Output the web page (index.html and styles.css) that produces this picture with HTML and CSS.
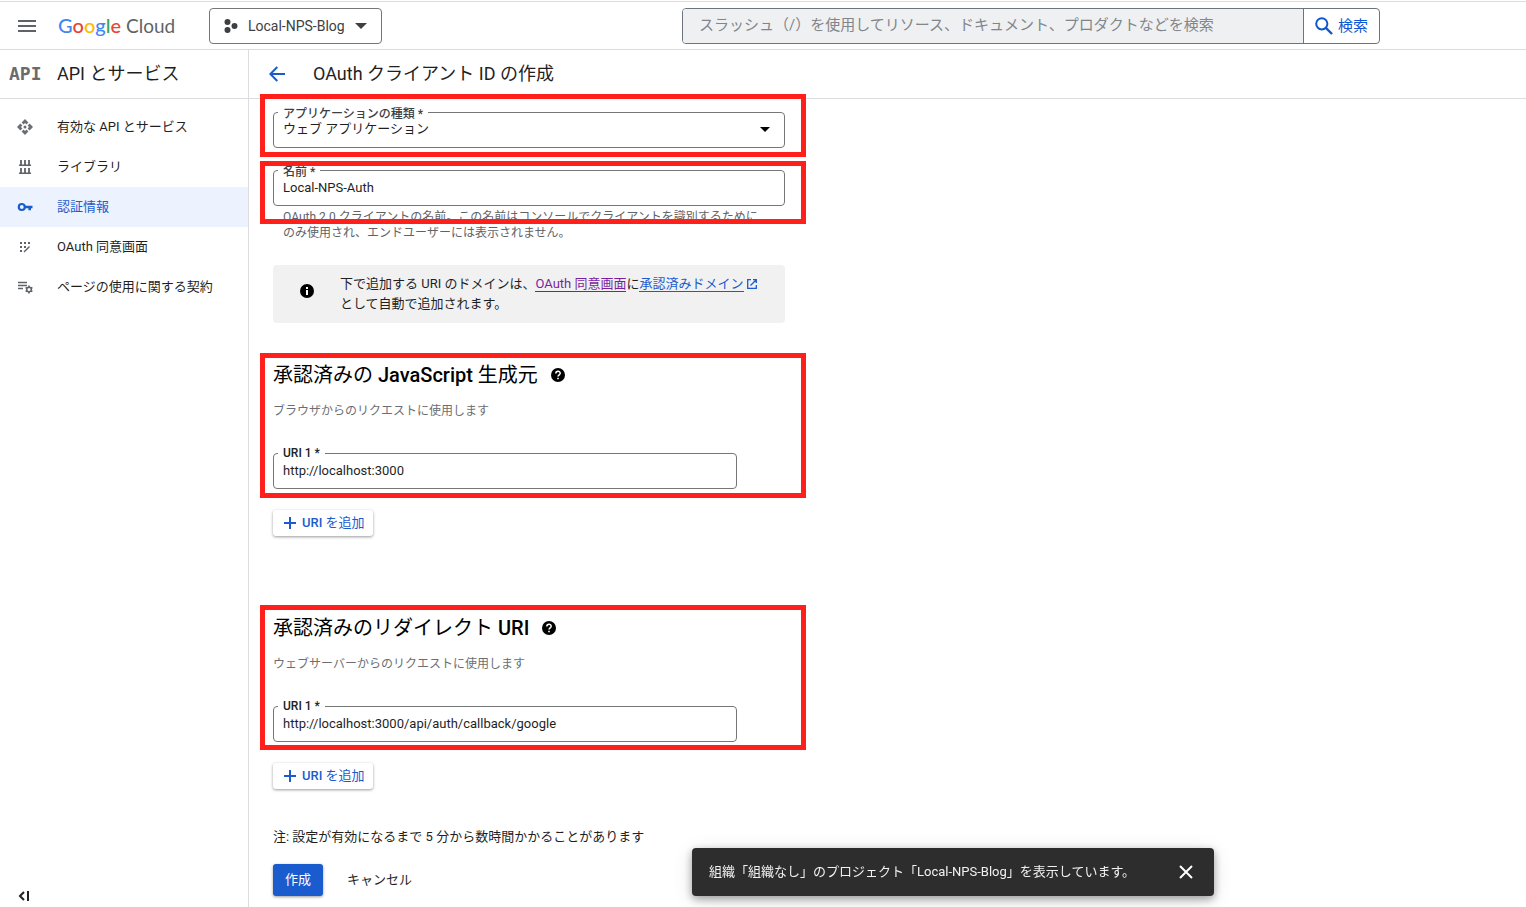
FILE: index.html
```html
<!DOCTYPE html>
<html lang="ja">
<head>
    <meta charset="UTF-8">
    <meta name="viewport" content="width=device-width, initial-scale=1.0">
    <title>OAuth クライアント ID の作成 - Google Cloud</title>
    <link rel="stylesheet" href="styles.css">
</head>
<body>
    <header class="topbar">
        <button class="icon-btn menu-btn" type="button" aria-label="メニュー">
            <svg width="18" height="12" viewBox="0 0 18 12"><path d="M0 1h18M0 6h18M0 11h18" stroke="#5f6368" stroke-width="2"/></svg>
        </button>
        <a class="logo" href="#"><span class="google"><span class="b">G</span><span class="r">o</span><span class="y">o</span><span class="b">g</span><span class="g">l</span><span class="r">e</span></span> <span class="cloud">Cloud</span></a>
        <button class="project-btn" type="button">
            <svg width="14" height="14" viewBox="0 0 14 14" fill="#3c4043"><circle cx="3.5" cy="3" r="3"/><circle cx="10.5" cy="7" r="3"/><circle cx="3.5" cy="11" r="3"/></svg>
            <span>Local-NPS-Blog</span>
            <svg width="12" height="6" viewBox="0 0 12 6"><path d="M0 0h12L6 6z" fill="#3c4043"/></svg>
        </button>
        <form class="search">
            <input type="text" aria-label="検索キーワード" placeholder="スラッシュ（/）を使用してリソース、ドキュメント、プロダクトなどを検索">
            <button type="button">
                <svg width="18" height="18" viewBox="0 0 18 18" fill="none" stroke="#0b57d0"><circle cx="6.8" cy="6.8" r="5.6" stroke-width="2"/><path d="M11 11l6 6" stroke-width="2.4"/></svg>
                検索
            </button>
        </form>
    </header>

    <div class="layout">
        <aside class="sidebar">
            <div class="product">
                <span class="product-icon">API</span>
                <span>API とサービス</span>
            </div>
            <nav class="nav">
                <a href="#">
                    <svg width="16" height="16" viewBox="0 0 16 16" fill="#6b6f73"><path d="M8 0l3.400 3.400-2 2L8 4 6.600 5.400l-2-2zM8 16l-3.400-3.400 2-2L8 12l1.400-1.400 2 2zM0 8l3.400-3.400 2 2L4 8l1.400 1.400-2 2zM16 8l-3.400 3.400-2-2L12 8l-1.400-1.400 2-2z"/><circle cx="8" cy="8" r="1.500"/></svg>
                    有効な API とサービス
                </a>
                <a href="#">
                    <svg width="16" height="16" viewBox="0 0 16 16" fill="none" stroke="#5f6368"><path d="M2 6.300h12M2 14.300h12" stroke-width="1.400"/><path d="M4 1v5M8 1v5M12 1v5M4 9v5M8 9v5M12 9v5" stroke-width="1.800"/></svg>
                    ライブラリ
                </a>
                <a class="active" href="#">
                    <svg width="16" height="16" viewBox="0 0 16 16" fill="none" stroke="#1a5cce"><circle cx="4.800" cy="8" r="3" stroke-width="2.200"/><path d="M8 8h7.500M12.700 8v3.300" stroke-width="2.600"/></svg>
                    認証情報
                </a>
                <a href="#">
                    <svg width="16" height="16" viewBox="0 0 16 16"><path d="M3 3h2v2H3zM7 3h2v2H7zM11 3h2v2h-2zM3 7h2v2H3zM7 7h2v2H7zM3 11h2v2H3z" fill="#5f6368"/><path d="M7 13l5.500-5.500" stroke="#5f6368" stroke-width="1.400"/></svg>
                    OAuth 同意画面
                </a>
                <a href="#">
                    <svg width="16" height="16" viewBox="0 0 16 16" fill="none" stroke="#5f6368"><path d="M1 3.500h9M1 6.500h9M1 9.500h5" stroke-width="1.300"/><circle cx="12" cy="10.500" r="2.300" stroke-width="1.500"/><path d="M12 6.600v1.600M12 12.800v1.600M8.600 8.500l1.400.8M14 11.700l1.400.8M8.600 12.500l1.400-.8M14 9.300l1.400-.8" stroke-width="1.600"/></svg>
                    ページの使用に関する契約
                </a>
            </nav>
            <button class="icon-btn collapse" type="button" aria-label="折りたたむ">
                <svg width="12" height="10" viewBox="0 0 12 10" fill="none" stroke="#202124"><path d="M6 1L2 5l4 4" stroke-width="2"/><path d="M10 0v10" stroke-width="2"/></svg>
            </button>
        </aside>

        <main class="main">
            <div class="title-bar">
                <button class="icon-btn" type="button" aria-label="戻る">
                    <svg width="16" height="16" viewBox="0 0 16 16" fill="none" stroke="#1a5cce" stroke-width="2"><path d="M16 8H1.500M8.300 1L1.300 8l7 7"/></svg>
                </button>
                <h1>OAuth クライアント ID の作成</h1>
            </div>

            <form class="form">
                <div class="field mark mark-type">
                    <label for="type">アプリケーションの種類 *</label>
                    <select id="type">
                        <option>ウェブ アプリケーション</option>
                    </select>
                    <svg class="arrow" width="10" height="5" viewBox="0 0 10 5"><path d="M0 0h10L5 5z"/></svg>
                </div>
                <div class="field mark mark-name">
                    <label for="name">名前 *</label>
                    <input id="name" type="text" value="Local-NPS-Auth">
                </div>
                <p class="hint">OAuth 2.0 クライアントの名前。この名前はコンソールでクライアントを識別するためにのみ使用され、エンドユーザーには表示されません。</p>

                <div class="info">
                    <svg class="info-icon" width="14" height="14" viewBox="0 0 14 14"><circle cx="7" cy="7" r="7"/><path d="M6 3h2v2H6zM6 6h2v5H6z" fill="#fff"/></svg>
                    <p>下で追加する URI のドメインは、<a class="visited" href="#">OAuth 同意画面</a>に<a href="#">承認済みドメイン</a><svg class="ext" width="10" height="10" viewBox="0 0 10 10" fill="none" stroke="#1a5cce" stroke-width="1.300"><path d="M4 .7H.7v8.600h8.600V6M6 .7h3.300V4M9.300.7L3.500 6.500"/></svg> として自動で追加されます。</p>
                </div>

                <section class="uri-group mark">
                    <h2>
                        <span>承認済みの <b>JavaScript</b> 生成元</span>
                        <svg width="14" height="14" viewBox="0 0 14 14"><circle cx="7" cy="7" r="7"/><path d="M4.800 5.600C4.800 2.400 9.300 2.600 9.200 5.300 9.200 6.800 7 6.900 7 8.600" fill="none" stroke="#fff" stroke-width="1.500"/><path d="M6.200 9.700h1.600v1.600H6.200z" fill="#fff"/></svg>
                    </h2>
                    <p class="desc">ブラウザからのリクエストに使用します</p>
                    <div class="field uri">
                        <label for="origin">URI 1 *</label>
                        <input id="origin" type="text" value="http://localhost:3000">
                    </div>
                </section>
                <button class="add-btn" type="button">
                    <svg width="12" height="12" viewBox="0 0 12 12"><path d="M6 0v12M0 6h12" stroke="#1a5cce" stroke-width="2"/></svg>
                    <span><b>URI</b> を追加</span>
                </button>

                <section class="uri-group redirect mark">
                    <h2>
                        <span>承認済みのリダイレクト <b>URI</b></span>
                        <svg width="14" height="14" viewBox="0 0 14 14"><circle cx="7" cy="7" r="7"/><path d="M4.800 5.600C4.800 2.400 9.300 2.600 9.200 5.300 9.200 6.800 7 6.900 7 8.600" fill="none" stroke="#fff" stroke-width="1.500"/><path d="M6.200 9.700h1.600v1.600H6.200z" fill="#fff"/></svg>
                    </h2>
                    <p class="desc">ウェブサーバーからのリクエストに使用します</p>
                    <div class="field uri">
                        <label for="redirect">URI 1 *</label>
                        <input id="redirect" type="text" value="http://localhost:3000/api/auth/callback/google">
                    </div>
                </section>
                <button class="add-btn" type="button">
                    <svg width="12" height="12" viewBox="0 0 12 12"><path d="M6 0v12M0 6h12" stroke="#1a5cce" stroke-width="2"/></svg>
                    <span><b>URI</b> を追加</span>
                </button>

                <p class="note">注: 設定が有効になるまで 5 分から数時間かかることがあります</p>
                <div class="actions">
                    <button class="submit" type="button">作成</button>
                    <button class="cancel" type="button">キャンセル</button>
                </div>
            </form>
        </main>
    </div>

    <div class="snackbar" role="status">
        <span>組織「組織なし」のプロジェクト「Local-NPS-Blog」を表示しています。</span>
        <button class="icon-btn" type="button" aria-label="閉じる">
            <svg width="14" height="14" viewBox="0 0 14 14"><path d="M1 1l12 12M13 1L1 13" stroke="#fff" stroke-width="2"/></svg>
        </button>
    </div>
</body>
</html>
```
FILE: styles.css
```css
* {
    box-sizing: border-box;
}

body {
    display: flex;
    flex-direction: column;
    min-height: 100vh;
    margin: 0;
    font: 13px/20px Roboto, "Noto Sans CJK JP", sans-serif;
    color: #1f1f1f;
    background: #fff;
}

h1, h2, p {
    margin: 0;
}

b {
    font-weight: 500;
}

button, input, select {
    font: inherit;
    color: inherit;
}

button {
    padding: 0;
    border: none;
    background: none;
    cursor: pointer;
}

svg {
    display: block;
    flex: none;
}

.icon-btn {
    display: flex;
    flex: none;
}

/* ヘッダー */
.topbar {
    display: flex;
    align-items: center;
    height: 49px;
    margin-top: 1px;
    padding: 0 146px 0 18px;
    border-top: 1px solid #dadce0;
    border-bottom: 1px solid #dadce0;
}

.logo {
    display: flex;
    flex: none;
    align-items: baseline;
    gap: 5px;
    width: 129px;
    margin-left: 22px;
    font-family: Lato, sans-serif;
    line-height: 24px;
    color: #5f6368;
    text-decoration: none;
    white-space: nowrap;
}

.google {
    font-size: 20px;
    font-weight: 500;
}

.cloud {
    font-size: 19px;
}

.logo .b { color: #4285f4; }
.logo .r { color: #ea4335; }
.logo .y { color: #fbbc04; }
.logo .g { color: #34a853; }

.project-btn {
    display: flex;
    flex: none;
    align-items: center;
    gap: 10px;
    width: 173px;
    height: 36px;
    margin-left: 22px;
    padding: 0 14px;
    border: 1px solid #747775;
    border-radius: 4px;
    font-size: 14px;
    color: #3c4043;
    white-space: nowrap;
}

.search {
    display: flex;
    flex: 1;
    height: 36px;
    margin-left: 300px;
    border: 1px solid #6c757d;
    border-radius: 4px;
    overflow: hidden;
    font-size: 15px;
}

.search input {
    flex: 1;
    min-width: 0;
    padding: 0 16px 2px;
    border: none;
    background: #eff0f2;
}

.search input::placeholder {
    color: #80868b;
}

.search button {
    display: flex;
    align-items: center;
    gap: 5px;
    width: 76px;
    padding-left: 11px;
    border-left: 1px solid #6c757d;
    color: #0b57d0;
}

.layout {
    display: flex;
    flex: 1;
}

/* サイドバー */
.sidebar {
    display: flex;
    flex: none;
    flex-direction: column;
    width: 249px;
    border-right: 1px solid #dadce0;
}

.product {
    display: flex;
    align-items: center;
    height: 49px;
    padding-left: 9px;
    border-bottom: 1px solid #dadce0;
    font-size: 18px;
}

.product-icon {
    width: 48px;
    font-family: "DejaVu Sans Mono", monospace;
    font-weight: bold;
    color: #6b6b6b;
}

.nav {
    padding-top: 8px;
}

.nav a {
    display: flex;
    align-items: center;
    gap: 24px;
    height: 40px;
    padding-left: 17px;
    color: #1f1f1f;
    text-decoration: none;
}

.nav .active {
    background: #ecf3fe;
    color: #1a5cce;
}

.collapse {
    margin: auto 0 6px 18px;
}

/* メイン */
.main {
    flex: 1;
    min-width: 0;
}

.title-bar {
    display: flex;
    align-items: center;
    gap: 28px;
    height: 49px;
    padding-left: 20px;
    border-bottom: 1px solid #dadce0;
}

h1 {
    font-size: 18px;
    font-weight: 400;
}

.form {
    max-width: 536px;
    padding: 13px 0 11px 24px;
}

.field {
    position: relative;
    margin-bottom: 22px;
}

.field label {
    position: absolute;
    top: -6px;
    left: 5px;
    padding: 0 5px;
    background: #fff;
    font-size: 12px;
    line-height: 16px;
    font-weight: 500;
    color: #3c4043;
}

.field input,
.field select {
    display: block;
    width: 100%;
    height: 36px;
    padding: 0 9px 2px;
    border: 1px solid #747775;
    border-radius: 4px;
    background: #fff;
    appearance: none;
}

.arrow {
    position: absolute;
    top: 15px;
    right: 15px;
}

/* 赤枠 */
.mark {
    position: relative;
}

.mark::after {
    content: "";
    position: absolute;
    inset: -10px -21px -9px -13px;
    border: 5px solid #ff201c;
    pointer-events: none;
}

.mark-type::after {
    top: -18px;
}

.mark-name::after {
    top: -9px;
    bottom: -18px;
}

.mark-name {
    margin-bottom: 3px;
}

.hint {
    padding: 0 24px 0 10px;
    font-size: 12px;
    line-height: 16px;
    color: #5f6368;
}

.info {
    display: flex;
    gap: 26px;
    margin: 24px 0 40px;
    padding: 9px 16px 9px 27px;
    border-radius: 4px;
    background: #f1f1f1;
}

.info-icon {
    margin-top: 10px;
}

.info a {
    border-bottom: 1px solid #1a5cce;
    color: #1a5cce;
    text-decoration: none;
}

.info .visited {
    border-color: #7b1fa2;
    color: #7b1fa2;
}

.ext {
    display: inline-block;
    margin-left: 3px;
    vertical-align: -1px;
}

.uri-group h2 {
    display: flex;
    align-items: center;
    gap: 13px;
    font-size: 20px;
    line-height: 24px;
    font-weight: 400;
    color: #000;
}

.desc {
    margin: 16px 0 34px;
    font-size: 12px;
    line-height: 16px;
    color: #6b6f73;
}

.uri {
    margin: 0 48px 0 0;
}

.uri label {
    top: -8px;
    color: #202124;
}

.redirect {
    margin-top: 80px;
}

.redirect::after {
    top: -11px;
    bottom: -8px;
}

.add-btn {
    display: flex;
    align-items: center;
    gap: 6px;
    width: 100px;
    height: 26px;
    margin-top: 21px;
    padding-left: 11px;
    border-radius: 3px;
    box-shadow: 0 1px 3px rgba(0, 0, 0, 0.4);
    color: #1a5cce;
    white-space: nowrap;
}

.note {
    margin: 38px 0 17px;
}

.actions {
    display: flex;
    gap: 24px;
}

.submit {
    width: 50px;
    height: 32px;
    border-radius: 3px;
    background: #1a5cce;
    box-shadow: 0 1px 3px rgba(0, 0, 0, 0.4);
    color: #fff;
}

/* 通知 */
.snackbar {
    position: fixed;
    right: 312px;
    bottom: 11px;
    display: flex;
    align-items: center;
    justify-content: space-between;
    width: 522px;
    height: 48px;
    padding: 0 21px 0 17px;
    border-radius: 4px;
    background: #2d2d2d;
    box-shadow: 0 3px 8px rgba(0, 0, 0, 0.35), 0 4px 20px rgba(0, 0, 0, 0.12);
    color: #f1f1f1;
}
```
